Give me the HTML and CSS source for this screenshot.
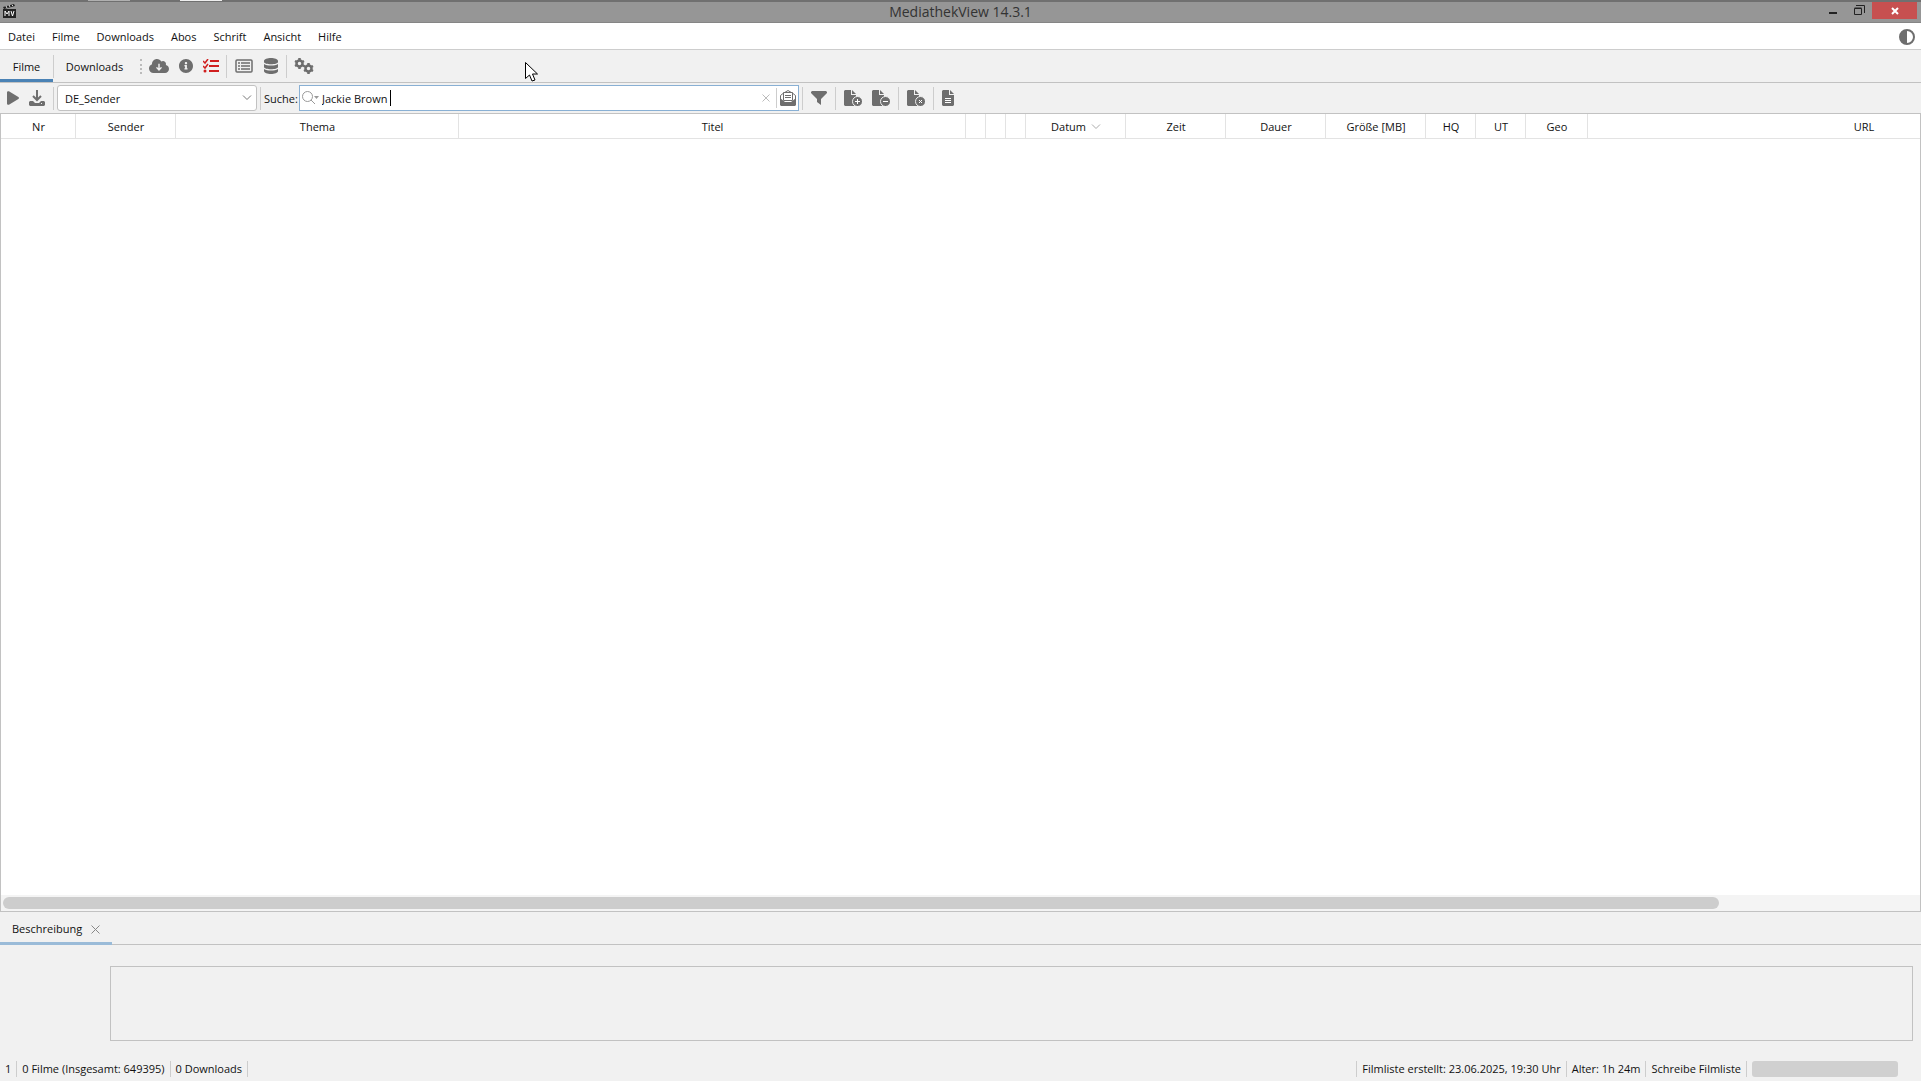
FILE: index.html
```html
<!DOCTYPE html>
<html lang="de">
<head>
    <meta charset="utf-8">
    <title>MediathekView 14.3.1</title>
    <link rel="stylesheet" href="styles.css">
</head>
<body>
    <div class="desktop-edge"><span class="edge-grey"></span><span class="edge-white"></span></div>

    <header class="titlebar">
        <svg class="app-icon" viewBox="0 0 13 14">
            <path fill="#222" d="M0 3 11 0l1 2L1 5zM0 5h13v9H0z"/>
            <path stroke="#ddd" stroke-width="1" fill="none" d="M3 2l1 2M6 1l1 2M9 1l1 1"/>
            <path stroke="#fff" stroke-width="1" fill="none" d="M2 12V7l2 3 2-3v5M8 7l1.500 5L11 7"/>
        </svg>
        <h1>MediathekView 14.3.1</h1>
        <div class="window-buttons">
            <button class="win" aria-label="Minimieren"><svg width="10" height="12"><path fill="#222" d="M1 8h8v2H1z"/></svg></button>
            <button class="win" aria-label="Wiederherstellen"><svg width="11" height="11" fill="none" stroke="#222"><path d="M.5 3.500h7v6h-7z"/><path d="M.5 3h7M2 .5h8.500V8"/></svg></button>
            <button class="win close" aria-label="Schließen"><svg width="8" height="8"><path stroke="#fff" stroke-width="2" d="M1 1l6 6M7 1L1 7"/></svg></button>
        </div>
    </header>

    <nav class="menubar">
        <button>Datei</button>
        <button>Filme</button>
        <button>Downloads</button>
        <button>Abos</button>
        <button>Schrift</button>
        <button>Ansicht</button>
        <button>Hilfe</button>
        <button class="theme" aria-label="Farbschema">
            <svg width="16" height="16" viewBox="0 0 16 16"><circle cx="8" cy="8" r="7" fill="#fff" stroke="#6e6e6e" stroke-width="2"/><path fill="#6e6e6e" d="M8 1a7 7 0 0 0 0 14z"/></svg>
        </button>
    </nav>

    <div class="toolbar main-tools">
        <button class="tab active">Filme</button>
        <span class="sep tall"></span>
        <button class="tab wide">Downloads</button>
        <span class="grip"></span>
        <button class="icon" aria-label="Filmliste laden">
            <svg width="20" height="16" viewBox="0 0 640 512"><path d="M537.6 226.600c4.100-10.700 6.400-22.400 6.400-34.600 0-53-43-96-96-96-19.700 0-38.100 6-53.300 16.200C367 64.200 315.300 32 256 32c-88.400 0-160 71.600-160 160 0 2.700.1 5.400.2 8.100C40.200 219.800 0 273.200 0 336c0 79.500 64.500 144 144 144h368c70.700 0 128-57.300 128-128 0-61.900-44-113.600-102.400-125.400z"/><path fill="none" stroke="#f1f1f1" stroke-width="46" d="M320 180v200M240 300l80 86 80-86"/></svg>
        </button>
        <button class="icon" aria-label="Filminformation">
            <svg width="14" height="14" viewBox="8 8 496 496"><path d="M256 8C119.043 8 8 119.083 8 256c0 136.997 111.043 248 248 248s248-111.003 248-248C504 119.083 392.957 8 256 8zm0 110c23.196 0 42 18.804 42 42s-18.804 42-42 42-42-18.804-42-42 18.804-42 42-42zm56 254c0 6.627-5.373 12-12 12h-88c-6.627 0-12-5.373-12-12v-24c0-6.627 5.373-12 12-12h12v-64h-12c-6.627 0-12-5.373-12-12v-24c0-6.627 5.373-12 12-12h64c6.627 0 12 5.373 12 12v100h12c6.627 0 12 5.373 12 12v24z"/></svg>
        </button>
        <button class="icon" aria-label="Auswahl">
            <svg width="16" height="14" viewBox="0 0 16 14" fill="none" stroke="#d01f1f"><path stroke-width="2" d="M7 2h9M6 7h10M6 12h10"/><path stroke-width="1.500" d="M0 2l2 2 3-4M0 7l2 2 3-4"/><circle cx="2" cy="12" r="1.500" fill="#d01f1f" stroke="none"/></svg>
        </button>
        <span class="sep"></span>
        <button class="icon" aria-label="Liste">
            <svg width="18" height="14" viewBox="0 0 18 14" fill="none" stroke="#6e6e6e"><rect x="1" y="1" width="16" height="12" rx="1" stroke-width="1.500"/><path stroke-width="1.500" d="M6 4h9M6 7h9M6 10h9M3 4h2M3 7h2M3 10h2"/></svg>
        </button>
        <button class="icon" aria-label="Datenbank">
            <svg width="14" height="16" viewBox="0 0 14 16"><path d="M0 3c0-4 14-4 14 0v1c0 3-14 3-14 0zM0 6c3 2 11 2 14 0v3c0 3-14 3-14 0zM0 11c3 2 11 2 14 0v2c0 4-14 4-14 0z"/></svg>
        </button>
        <span class="sep"></span>
        <button class="icon" aria-label="Einstellungen">
            <svg width="20" height="16" viewBox="0 0 20 16" fill="none" stroke="#6e6e6e"><g stroke-width="2.500"><circle cx="5.500" cy="5.500" r="3"/><circle cx="14.500" cy="10.500" r="3"/></g><path stroke-width="2.500" d="M5.500 0v2M5.500 9v2M1 3l2 1M8 7l2 1M1 8l2-1M8 4l2-1M14.500 5v2M14.500 14v2M10 8l2 1M17 12l2 1M10 13l2-1M17 9l2-1"/></svg>
        </button>
    </div>

    <div class="toolbar filters">
        <button class="icon play" aria-label="Abspielen">
            <svg width="12" height="14" viewBox="0 0 448 512"><path d="M424.400 214.700L72.400 6.600C43.800-10.300 0 6.100 0 47.900V464c0 37.500 40.700 60.100 72.400 41.300l352-208c31.400-18.500 31.500-64.100 0-82.600z"/></svg>
        </button>
        <button class="icon save" aria-label="Aufzeichnen">
            <svg width="16" height="16" viewBox="0 0 16 16"><path d="M1 11h3l2 2h4l2-2h3l1 1v3l-1 1H1l-1-1v-3z"/><path fill="none" stroke="#6e6e6e" stroke-width="2" d="M8 0v10M4 6l4 4 4-4"/><path fill="#f1f1f1" d="M12 13h1v1h-1z"/></svg>
        </button>
        <span class="sep"></span>
        <div class="select-box">
            <select aria-label="Sender-Filter"><option>DE_Sender</option></select>
            <svg class="chevron" width="10" height="6"><path fill="none" stroke="#777" d="M1 .5l4 4 4-4"/></svg>
        </div>
        <span class="sep"></span>
        <label for="search">Suche:</label>
        <div class="search-box">
            <svg width="17" height="14" viewBox="0 0 17 14" fill="none" stroke="#999"><circle cx="5.500" cy="5.500" r="5"/><path d="M9 9l4 4"/><path fill="#999" stroke="none" d="M12 5h5l-2.500 3z"/></svg>
            <input type="text" id="search" value="Jackie Brown">
            <span class="caret"></span>
            <button class="clear" aria-label="Leeren"><svg width="8" height="8"><path stroke="#bbb" d="M.5.5l7 7M7.500.5l-7 7"/></svg></button>
            <span class="sep"></span>
            <button class="mail" aria-label="Suche in Beschreibung"><svg width="16" height="16" viewBox="0 0 16 16"><path fill="#fff" stroke="#6e6e6e" d="M.5 9V5.500L3 3.500l5-3 5 3 2.500 2V9"/><path fill="#fff" stroke="#6e6e6e" d="M3.500 2.500h9v8h-9z"/><path d="M0 8l5 4h6l5-4v7l-1 1H1l-1-1z"/><path fill="none" stroke="#6e6e6e" d="M5 5.500h6M5 7.500h6"/></svg></button>
        </div>
        <span class="sep"></span>
        <button class="icon funnel" aria-label="Filter">
            <svg width="16" height="14" viewBox="0 0 16 14"><path d="M1 0h14l1 1v1l-6 6v6l-4-3V8L0 2V1z"/></svg>
        </button>
        <span class="sep"></span>
        <button class="icon file" aria-label="Filter anlegen">
            <svg width="18" height="16" viewBox="0 0 18 16"><path d="M1 0h6v5h5v11H1l-1-1V1zM8 0l4 4H8z"/><circle cx="13.500" cy="11.500" r="5" stroke="#f1f1f1"/><path fill="none" stroke="#fff" d="M11 11.500h5M13.500 9v5"/></svg>
        </button>
        <button class="icon file" aria-label="Filter entfernen">
            <svg width="18" height="16" viewBox="0 0 18 16"><path d="M1 0h6v5h5v11H1l-1-1V1zM8 0l4 4H8z"/><circle cx="13.500" cy="11.500" r="5" stroke="#f1f1f1"/><path fill="none" stroke="#fff" d="M11 11.500h5"/></svg>
        </button>
        <span class="sep"></span>
        <button class="icon file" aria-label="Filter löschen">
            <svg width="18" height="16" viewBox="0 0 18 16"><path d="M1 0h6v5h5v11H1l-1-1V1zM8 0l4 4H8z"/><circle cx="13.500" cy="11.500" r="5" stroke="#f1f1f1"/><path fill="none" stroke="#fff" d="M12 10l3 3M15 10l-3 3"/></svg>
        </button>
        <span class="sep"></span>
        <button class="icon" aria-label="Filter bearbeiten">
            <svg width="12" height="16" viewBox="0 0 12 16"><path d="M1 0h6v5h5v10l-1 1H1l-1-1V1zM8 0l4 4H8z"/><path fill="none" stroke="#fff" d="M3 8.500h6M3 10.500h6M3 12.500h6"/></svg>
        </button>
    </div>

    <main class="film-list">
        <div class="table-view">
            <table>
                <colgroup>
                    <col class="c-nr"><col class="c-std"><col class="c-thema"><col class="c-titel">
                    <col class="c-btn"><col class="c-btn"><col class="c-btn">
                    <col class="c-std"><col class="c-std"><col class="c-std"><col class="c-std">
                    <col class="c-flag"><col class="c-flag"><col class="c-geo"><col class="c-url">
                </colgroup>
                <thead>
                    <tr>
                        <th>Nr</th>
                        <th>Sender</th>
                        <th>Thema</th>
                        <th>Titel</th>
                        <th></th>
                        <th></th>
                        <th></th>
                        <th>Datum <svg class="sort" width="10" height="6"><path fill="none" stroke="#aaa" d="M1 .5l4 4 4-4"/></svg></th>
                        <th>Zeit</th>
                        <th>Dauer</th>
                        <th>Größe [MB]</th>
                        <th>HQ</th>
                        <th>UT</th>
                        <th>Geo</th>
                        <th>URL</th>
                    </tr>
                </thead>
            </table>
        </div>
        <div class="scrollbar"><div class="thumb"></div></div>
    </main>

    <section class="description">
        <div class="desc-tabs">
            <div class="desc-tab">
                <span>Beschreibung</span>
                <button aria-label="Tab schließen"><svg width="9" height="9"><path stroke="#888" d="M.5.5l8 8M8.500.5l-8 8"/></svg></button>
            </div>
        </div>
        <div class="desc-text"></div>
    </section>

    <footer class="statusbar">
        <span>1</span>
        <i class="sep"></i>
        <span>0 Filme (Insgesamt: 649395)</span>
        <i class="sep"></i>
        <span>0 Downloads</span>
        <i class="sep"></i>
        <i class="sep push"></i>
        <span>Filmliste erstellt: 23.06.2025, 19:30 Uhr</span>
        <i class="sep"></i>
        <span>Alter: 1h 24m</span>
        <i class="sep"></i>
        <span>Schreibe Filmliste</span>
        <i class="sep"></i>
        <div class="progress"></div>
    </footer>

    <svg class="pointer" width="13" height="20" viewBox="0 0 13 20"><path fill="#fff" stroke="#000" d="M.5.5v16l4-3.500 2.500 6 3-1-2.500-6h5z"/></svg>
</body>
</html>
```

FILE: styles.css
```css
* {
    box-sizing: border-box;
}

body {
    margin: 0;
    height: 100vh;
    display: flex;
    flex-direction: column;
    overflow: hidden;
    background: #f1f1f1;
    color: #111;
    font-family: "Open Sans", "Noto Sans", sans-serif;
    font-size: 11px;
    line-height: 16px;
}

button,
input,
select {
    font: inherit;
    color: inherit;
    border: 0;
    margin: 0;
    padding: 0;
    background: none;
    outline: 0;
}

svg {
    display: block;
    flex: none;
}

/* window frame */
.desktop-edge {
    display: flex;
    gap: 50px;
    height: 2px;
    padding: 0 0 1px 88px;
    background: #707070;
}

.desktop-edge span {
    width: 42px;
}

.edge-grey {
    background: #b0b0b0;
}

.edge-white {
    background: #eee;
}

.titlebar {
    display: grid;
    grid-template-columns: 1fr auto 1fr;
    height: 21px;
    background: #969696;
    border-bottom: 1px solid #858585;
}

.app-icon {
    width: 13px;
    height: 14px;
    margin: 2px 3px;
}

.titlebar h1 {
    margin: 0;
    font-size: 14px;
    font-weight: normal;
    line-height: 20px;
    color: #333;
}

.window-buttons {
    display: flex;
    justify-content: flex-end;
    padding-right: 4px;
}

.win {
    width: 26px;
    height: 16px;
    display: flex;
    align-items: center;
    justify-content: center;
}

.win.close {
    width: 45px;
    height: 17px;
    background: #c75050;
}

.menubar {
    display: flex;
    align-items: center;
    gap: 17px;
    height: 27px;
    padding: 2px 6px 0 8px;
    background: #fff;
    border-bottom: 1px solid #cdcdcd;
}

.theme {
    margin-left: auto;
}

/* toolbars */
.toolbar {
    display: flex;
    align-items: center;
    height: 33px;
    border-bottom: 1px solid #c2c2c2;
}

.sep {
    width: 1px;
    height: 23px;
    background: #cdcdcd;
    flex: none;
}

.main-tools .sep {
    margin: 0 3px;
}

.main-tools .tall {
    margin: 0;
}

.tab {
    width: 53px;
    height: 32px;
    padding-top: 4px;
    border-bottom: 3px solid transparent;
}

.tab.wide {
    width: 81px;
}

.tab.active {
    border-bottom-color: #4a82b5;
}

.grip {
    height: 15px;
    margin: 0 3px 0 5px;
    border-left: 2px dotted #bbb;
}

.icon {
    display: flex;
    align-items: center;
    justify-content: center;
    width: 28px;
    height: 26px;
    fill: #6e6e6e;
}

.icon + .icon {
    width: 25px;
}

.filters {
    height: 31px;
}

.icon.play {
    width: 25px;
}

.icon.save {
    width: 24px;
    margin-right: 4px;
}

.select-box {
    position: relative;
    width: 200px;
    margin: 0 3px;
}

.select-box select {
    appearance: none;
    display: block;
    width: 100%;
    height: 26px;
    padding: 1px 24px 0 7px;
    background: #fff;
    border: 1px solid #c2c2c2;
    border-radius: 3px;
}

.chevron {
    position: absolute;
    right: 5px;
    top: 10px;
}

.filters label {
    width: 38px;
    padding: 1px 0 0 3px;
}

.search-box {
    position: relative;
    display: flex;
    align-items: center;
    width: 500px;
    height: 26px;
    padding: 0 2px;
    background: #fff;
    border: 1px solid #89b0d4;
}

.search-box input {
    flex: 1;
    min-width: 0;
    padding: 1px 0 0 3px;
}

.caret {
    position: absolute;
    left: 90px;
    top: 4px;
    width: 1px;
    height: 16px;
    background: #000;
}

.clear {
    margin-right: 6px;
}

.search-box .sep {
    height: 20px;
}

.mail {
    margin-left: 3px;
    fill: #6e6e6e;
}

.search-box + .sep {
    margin-left: 3px;
}

.icon.funnel {
    width: 32px;
}

.icon.file {
    width: 34px;
}

.file + .file {
    margin-left: -6px;
}

/* film table */
.film-list {
    flex: 1;
    display: flex;
    flex-direction: column;
    border: 1px solid #c2c2c2;
    border-top: 0;
}

.table-view {
    flex: 1;
    overflow: hidden;
    background: #fff;
}

table {
    table-layout: fixed;
    width: 2139px;
    border-collapse: separate;
    border-spacing: 0;
}

th {
    height: 25px;
    padding: 2px 0 0 1px;
    font-weight: normal;
    border-right: 1px solid #e3e3e3;
    border-bottom: 1px solid #e3e3e3;
}

.c-nr { width: 75px; }
.c-std { width: 100px; }
.c-thema { width: 283px; }
.c-titel { width: 507px; }
.c-btn { width: 20px; }
.c-flag { width: 50px; }
.c-geo { width: 62px; }
.c-url { width: 552px; }

.sort {
    display: inline-block;
    margin-left: 2px;
    vertical-align: 1px;
}

.scrollbar {
    height: 16px;
    padding: 2px;
    background: #f4f4f4;
}

.thumb {
    width: 89.600%;
    height: 12px;
    border-radius: 6px;
    background: #cdcdcd;
}

/* description */
.desc-tabs {
    display: flex;
    height: 33px;
    border-bottom: 1px solid #c2c2c2;
}

.desc-tab {
    display: flex;
    align-items: center;
    gap: 9px;
    height: 33px;
    padding: 4px 12px 0;
    border-bottom: 3px solid #9abbd8;
}

.desc-text {
    height: 75px;
    margin: 21px 8px 16px 110px;
    border: 1px solid #c2c2c2;
}

.statusbar {
    display: flex;
    align-items: center;
    gap: 5px;
    height: 24px;
    padding: 0 23px 0 5px;
}

.statusbar .sep {
    height: 16px;
}

.push {
    margin-left: auto;
}

.progress {
    width: 146px;
    height: 16px;
    border-radius: 3px;
    background: #d0d0d0;
}

/* mouse pointer over the window */
.pointer {
    position: absolute;
    left: 525px;
    top: 62px;
}
```
